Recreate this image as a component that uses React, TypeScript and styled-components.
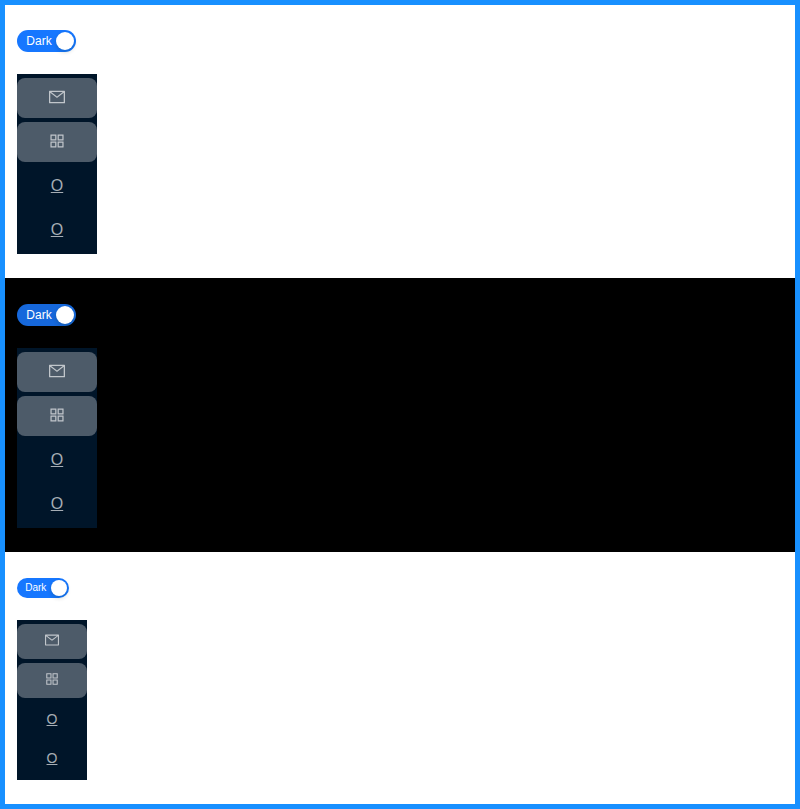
import React from "react";
import styled, { createGlobalStyle } from "styled-components";
import { AiOutlineMail, AiOutlineAppstore } from "react-icons/ai";

type Size = "middle" | "small";

const GlobalStyle = createGlobalStyle`
  *, *::before, *::after { box-sizing: border-box; }
  body { margin: 0; font-family: "Liberation Sans", Arial, sans-serif; }
`;

const Page = styled.main`
  width: 800px;
  height: 809px;
  border: 5px solid #1890ff;
  background: #fff;
`;

const Section = styled.section<{ $dark?: boolean; $size: Size }>`
  height: ${(p) => (p.$dark ? 274 : p.$size === "small" ? 252 : 273)}px;
  padding: ${(p) => (p.$dark || p.$size === "small" ? 26 : 25)}px 12px 0;
  background: ${(p) => (p.$dark ? "#000" : "#fff")};
`;

const Switch = styled.button<{ $dark?: boolean; $size: Size }>`
  display: flex;
  align-items: center;
  justify-content: space-between;
  width: ${(p) => (p.$size === "small" ? 52 : 59)}px;
  height: ${(p) => (p.$size === "small" ? 20 : 22)}px;
  margin: 0 0 22px;
  padding: 0 2px 0 ${(p) => (p.$size === "small" ? 8.2 : 9.34)}px;
  border: 0;
  border-radius: 100px;
  background: ${(p) => (p.$dark ? "#1668dc" : "#1677ff")};
  color: #fff;
  font-family: inherit;
  font-size: ${(p) => (p.$size === "small" ? 10 : 12)}px;
  line-height: 1;
`;

const Handle = styled.span<{ $size: Size }>`
  width: ${(p) => (p.$size === "small" ? 16 : 18)}px;
  height: ${(p) => (p.$size === "small" ? 16 : 18)}px;
  border-radius: 50%;
  background: #fff;
  box-shadow: 0 2px 4px rgba(0, 35, 11, 0.2);
`;

const Menu = styled.ul<{ $size: Size }>`
  display: flex;
  flex-direction: column;
  gap: 4px;
  width: ${(p) => (p.$size === "small" ? 70 : 80)}px;
  height: ${(p) => (p.$size === "small" ? 160 : 180)}px;
  margin: 0;
  padding: 4px 0;
  list-style: none;
  background: #001529;
`;

const Item = styled.li<{ $size: Size; $active?: boolean }>`
  display: flex;
  flex: none;
  align-items: center;
  justify-content: center;
  height: ${(p) => (p.$size === "small" ? 35 : 40)}px;
  padding-bottom: ${(p) => (p.$active ? (p.$size === "small" ? 3 : 2) : p.$size === "small" ? 1 : 0)}px;
  border-radius: 8px;
  background: ${(p) => (p.$active ? "#4d5b69" : "transparent")};
  color: ${(p) => (p.$active ? "#c1c6cb" : "#a6adb4")};
  font-size: ${(p) => (p.$size === "small" ? 14 : 16)}px;
`;

const Letter = styled.span`
  text-decoration: underline;
`;

const iconBox = "64 64 896 896";

const examples: { dark?: boolean; size: Size }[] = [
  { size: "middle" },
  { size: "middle", dark: true },
  { size: "small" },
];

export default function App() {
  return (
    <>
      <GlobalStyle />
      <Page>
        {examples.map(({ dark, size }, i) => (
          <Section key={i} $dark={dark} $size={size}>
            <Switch $dark={dark} $size={size} role="switch" aria-checked="true">
              Dark
              <Handle $size={size} />
            </Switch>
            <Menu $size={size}>
              <Item $size={size} $active><AiOutlineMail viewBox={iconBox} /></Item>
              <Item $size={size} $active><AiOutlineAppstore viewBox={iconBox} /></Item>
              <Item $size={size}><Letter>O</Letter></Item>
              <Item $size={size}><Letter>O</Letter></Item>
            </Menu>
          </Section>
        ))}
      </Page>
    </>
  );
}
